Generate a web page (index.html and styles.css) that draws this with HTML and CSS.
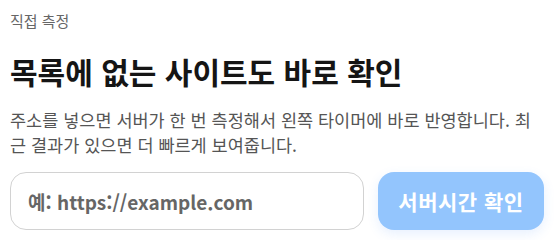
FILE: index.html
```html
<!DOCTYPE html>
<html lang="ko">
<head>
    <meta charset="UTF-8">
    <meta name="viewport" content="width=device-width, initial-scale=1.0">
    <title>직접 측정</title>
    <link rel="stylesheet" href="styles.css">
</head>
<body>
    <section class="measure">
        <div class="eyebrow">직접 측정</div>
        <h2>목록에 없는 사이트도 바로 확인</h2>
        <p class="desc">주소를 넣으면 서버가 한 번 측정해서 왼쪽 타이머에 바로 반영합니다. 최근 결과가 있으면 더 빠르게 보여줍니다.</p>

        <form class="measure-form" onsubmit="return false;">
            <input type="text" id="site-url" placeholder="예: https://example.com">
            <button type="submit" disabled>서버시간 확인</button>
        </form>
    </section>
</body>
</html>
```

FILE: styles.css
```css
body {
    margin: 0;
    background: #fff;
    font-family: "Noto Sans CJK KR", "Noto Sans", sans-serif;
    color: #111;
}

.measure {
    padding: 10px;
}

.eyebrow {
    font-size: 15px;
    line-height: 22px;
    color: #666;
}

h2 {
    margin: 20px 0 0;
    font-size: 30px;
    line-height: 38px;
    font-weight: 700;
    color: #151515;
}

.desc {
    margin: 17px 0 0;
    font-size: 17.5px;
    line-height: 25px;
    color: #555;
}

.measure-form {
    display: flex;
    gap: 14px;
    margin-top: 15px;
}

.measure-form input {
    flex: 1;
    min-width: 0;
    height: 58px;
    box-sizing: border-box;
    padding: 0 17px;
    border: 1px solid #d2d2d2;
    border-radius: 16px;
    font-family: inherit;
    font-size: 19px;
    font-weight: 700;
    color: #333;
    outline: none;
}

.measure-form input::placeholder {
    color: #666;
}

.measure-form button {
    width: 166px;
    height: 58px;
    border: 0;
    border-radius: 16px;
    background: #93c5fd;
    color: #fff;
    font-family: inherit;
    font-size: 21px;
    font-weight: 700;
    letter-spacing: 0.5px;
    box-shadow: 0 4px 12px rgba(59, 130, 246, 0.12);
}
```
